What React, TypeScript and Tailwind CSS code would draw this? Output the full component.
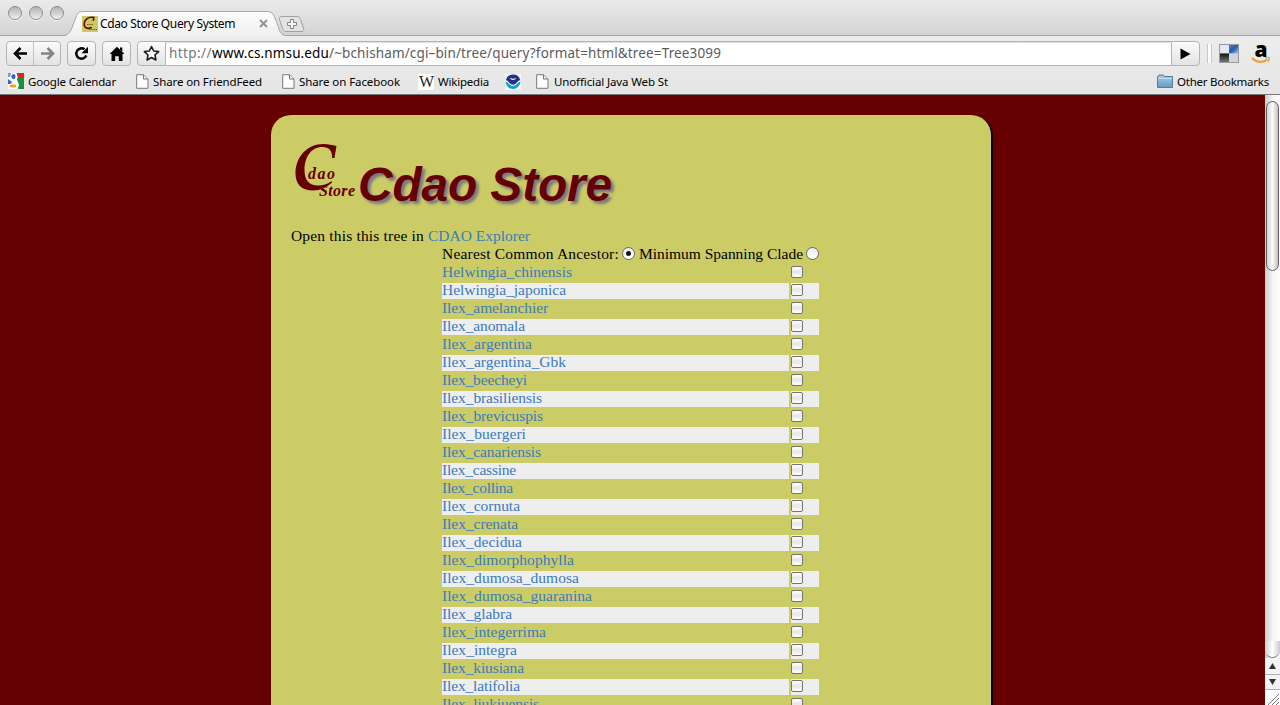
import { useLayoutEffect, useRef } from "react";
import type { ReactNode } from "react";

/** Single line of text tracked out (or in) so that it spans `w` pixels. */
function Fit({ w, className = "", children }: { w: number; className?: string; children: ReactNode }) {
  const ref = useRef<HTMLSpanElement>(null);
  useLayoutEffect(() => {
    const el = ref.current;
    if (!el) return;
    el.style.letterSpacing = "0px";
    const n = (el.textContent || "").length;
    el.style.letterSpacing = `${(w - el.getBoundingClientRect().width) / n}px`;
  }, [w]);
  return (
    <span ref={ref} className={`inline-block shrink-0 whitespace-pre ${className}`}>
      {children}
    </span>
  );
}

const species: [string, number][] = [
  ["Helwingia_chinensis", 130],
  ["Helwingia_japonica", 124],
  ["Ilex_amelanchier", 106],
  ["Ilex_anomala", 83],
  ["Ilex_argentina", 90],
  ["Ilex_argentina_Gbk", 124],
  ["Ilex_beecheyi", 85],
  ["Ilex_brasiliensis", 100],
  ["Ilex_brevicuspis", 101],
  ["Ilex_buergeri", 84],
  ["Ilex_canariensis", 99],
  ["Ilex_cassine", 74],
  ["Ilex_collina", 71],
  ["Ilex_cornuta", 78],
  ["Ilex_crenata", 76],
  ["Ilex_decidua", 80],
  ["Ilex_dimorphophylla", 132],
  ["Ilex_dumosa_dumosa", 137],
  ["Ilex_dumosa_guaranina", 150],
  ["Ilex_glabra", 70],
  ["Ilex_integerrima", 104],
  ["Ilex_integra", 75],
  ["Ilex_kiusiana", 82],
  ["Ilex_latifolia", 78],
  ["Ilex_liukiuensis", 97],
];

function TrafficLight() {
  return (
    <span className="size-[14px] rounded-full border border-[#8b8b8b] bg-linear-to-b from-[#b5b5b5] via-[#cfcfcf] to-[#f0f0f0] shadow-[0_1px_0_#f4f4f4]" />
  );
}

function TabStrip() {
  return (
    <div className="flex h-9 items-start bg-linear-to-b from-[#ebebeb] to-[#d3d3d3] shadow-[inset_0_-1px_0_#a3a3a3]">
      <div className="flex gap-[7px] pt-[6px] pl-2">
        <TrafficLight />
        <TrafficLight />
        <TrafficLight />
      </div>
      <div className="relative h-9 w-[222px] shrink-0">
        <svg className="absolute inset-0" width="222" height="36" viewBox="0 0 222 36">
          <defs>
            <linearGradient id="tab" x1="0" y1="0" x2="0" y2="1">
              <stop offset="0" stopColor="#fcfcfc" />
              <stop offset="1" stopColor="#f0f0f0" />
            </linearGradient>
          </defs>
          <path
            d="M0 35.5 C5 35 7 31 9 25 L12 17 C13.500 13 15 11.500 19 11.500 H203 C208 11.500 209 14 211 18 L214 26 C216 32 217 35 222 35.500 V36 H0Z"
            fill="url(#tab)"
          />
          <path
            d="M0 35.500 C5 35 7 31 9 25 L12 17 C13.500 13 15 11.500 19 11.500 H203 C208 11.500 209 14 211 18 L214 26 C216 32 217 35 222 35.500"
            fill="none"
            stroke="#a6a6a6"
          />
        </svg>
        <div className="relative flex h-9 items-center pt-[11px] pl-[18px]">
          <svg width="16" height="16" viewBox="0 0 16 16" className="shrink-0">
            <rect width="16" height="16" fill="#c9ca63" />
            <path d="M11.300 4.800 L11.800 1.500 C6 .3 2 4 2.200 8.300 C2.300 12 6 13.600 9.700 11.300" fill="none" stroke="#680000" strokeWidth="1.600" />
            <path d="M5 8.500h6M7 13.500h8" stroke="#9a4a1c" strokeWidth="1.200" strokeDasharray="1.500 .7" />
          </svg>
          <Fit w={135} className="ml-[2px] text-[12px] leading-4">Cdao Store Query System</Fit>
          <svg width="9" height="9" viewBox="0 0 9 9" className="ml-6 shrink-0">
            <path d="M1 1l7 7M8 1l-7 7" stroke="#929292" strokeWidth="1.900" />
          </svg>
        </div>
      </div>
      <svg width="28" height="18" viewBox="0 0 28 18" className="-ml-[8px] mt-[15px] shrink-0">
        <path d="M4 1.500 H19 C21 1.500 22 3 22.500 4.500 L25.500 13 C26.200 15 25.500 16.500 24 16.500 H8 C6 16.500 5 15 4.500 13.500 L1.500 4.500 C1 2.500 2 1.500 4 1.500Z" fill="#e3e3e3" stroke="#a0a0a0" />
        <path d="M12.500 4.500h3v3h3v3h-3v3h-3v-3h-3v-3h3z" fill="#f4f4f4" stroke="#858585" />
      </svg>
    </div>
  );
}

const btn =
  "flex h-[25px] shrink-0 items-center justify-center rounded-[4px] border border-[#b4b4b4] bg-linear-to-b from-[#fbfbfb] to-[#e3e3e3]";

function Arrow({ className }: { className: string }) {
  return (
    <svg width="15" height="13" viewBox="0 0 15 13" className={className}>
      <path d="M7.500 1 L2 6.500 L7.500 12 M2.500 6.500H14" fill="none" stroke="currentColor" strokeWidth="2.600" />
    </svg>
  );
}

function Toolbar() {
  return (
    <div className="flex h-[34px] items-start pt-[5px] pl-[6px]">
      <div className={`${btn} w-[55px]`}>
        <span className="flex h-full flex-1 items-center justify-center border-r border-[#c4c4c4]">
          <Arrow className="text-black" />
        </span>
        <span className="flex flex-1 items-center justify-center">
          <Arrow className="rotate-180 text-[#848484]" />
        </span>
      </div>
      <div className={`${btn} ml-[6px] w-[29px]`}>
        <svg width="15" height="15" viewBox="0 0 15 15">
          <path d="M12.300 9.600A5.200 5.200 0 1 1 10.500 3.300" fill="none" stroke="#000" strokeWidth="2.500" />
          <path d="M14 .8v6.500H7.500z" fill="#000" />
        </svg>
      </div>
      <div className={`${btn} ml-[6px] w-[29px]`}>
        <svg width="16" height="16" viewBox="0 0 16 16">
          <path d="M8 .7 L15.500 8 H13.500 V15 H9.800 V10.300 H6.200 V15 H2.500 V8 H.5Z M11 1.500h2.300v4L11 3.500z" fill="#000" />
        </svg>
      </div>
      <div className={`${btn} ml-[6px] w-[29px] rounded-r-none`}>
        <svg width="17" height="17" viewBox="0 0 17 17">
          <path d="M8.500 1.500 L10.700 6 L15.600 6.600 L12 10 L12.900 15 L8.500 12.500 L4.100 15 L5 10 L1.400 6.600 L6.300 6Z" fill="#fff" stroke="#1c1c1c" strokeWidth="1.600" strokeLinejoin="round" />
        </svg>
      </div>
      <div className="flex h-[25px] w-[1005px] items-center border-y border-[#b4b4b4] bg-white pl-[3px] text-[13.5px] text-[#5c5c5c] shadow-[inset_0_1px_1px_#dedede]">
        <Fit w={43} className="text-[#777]">http://</Fit>
        <Fit w={117} className="text-black">www.cs.nmsu.edu</Fit>
        <Fit w={392}>/~bchisham/cgi–bin/tree/query?format=html&tree=Tree3099</Fit>
      </div>
      <div className={`${btn} w-[29px] rounded-l-none`}>
        <svg width="11" height="12" viewBox="0 0 11 12">
          <path d="M.5.500 L10.500 6 L.5 11.500Z" fill="#000" />
        </svg>
      </div>
      <div className="mt-[3px] ml-[7px] h-[19px] w-[5px] shrink-0 border-x border-[#c7c7c7] bg-[#fafafa]" />
      <svg width="21" height="20" viewBox="0 0 21 20" className="mt-[3px] ml-[7px] shrink-0">
        <defs>
          <linearGradient id="deep" x1="0" y1="0" x2="1" y2="1">
            <stop offset="0" stopColor="#4a82cc" />
            <stop offset=".5" stopColor="#245bae" />
            <stop offset="1" stopColor="#a9c8ec" />
          </linearGradient>
          <linearGradient id="dark" x1="0" y1="0" x2="0" y2="1">
            <stop offset="0" stopColor="#111" />
            <stop offset="1" stopColor="#777" />
          </linearGradient>
        </defs>
        <rect x=".5" y=".5" width="19" height="18" fill="#bbb" stroke="#999" />
        <path d="M1 1h9v8.500H1z" fill="#e4e9f0" />
        <path d="M10 1h9v8.500h-9z" fill="url(#deep)" />
        <path d="M1 9.500h9V18H1z" fill="url(#dark)" />
        <path d="M10 9.500h9V18h-9z" fill="#d0d4dc" />
      </svg>
      <div className="relative ml-[11px] h-[24px] w-[20px] shrink-0">
        <span className="block -translate-y-px text-center font-['Open_Sans',sans-serif] text-[21px] leading-[18px] font-extrabold text-black">a</span>
        <svg width="20" height="9" viewBox="0 0 20 9" className="absolute top-[15px] left-0">
          <path d="M1 2 C5 6.500 12 7 16.500 3.500" fill="none" stroke="#e9a03c" strokeWidth="2.200" />
          <path d="M14 2 Q17 1 18.300 1.800 Q18.500 3.500 17 5.500" fill="none" stroke="#e9a03c" strokeWidth="1.300" />
        </svg>
      </div>
    </div>
  );
}

function PageIcon() {
  return (
    <svg width="13" height="15" viewBox="0 0 13 15" className="shrink-0 -translate-y-px">
      <path d="M.7.700 H7.500 L12 5 V14.300 H.7Z" fill="#fdfdfd" stroke="#777" />
      <path d="M7.500.700 V5 H12" fill="#ececec" stroke="#777" />
    </svg>
  );
}

function BookmarksBar() {
  return (
    <div className="flex h-[25px] items-center pb-px pl-2 text-[11.5px] text-black">
      <svg width="16" height="16" viewBox="0 0 16 16" className="shrink-0 -translate-y-px">
        <rect width="16" height="16" fill="#fff" />
        <path d="M0 0h3v4H0z" fill="#6f9be6" />
        <path d="M8.500 0H16v5h-6z" fill="#e02420" />
        <path d="M9 5h7v11h-6l1-5-2-3z" fill="#159141" />
        <path d="M0 6l4 3-1 2H0z" fill="#3167c8" />
        <ellipse cx="5.500" cy="3.600" rx="2.700" ry="3.200" fill="#2f68c8" stroke="#fff" strokeWidth="1.200" />
        <ellipse cx="5" cy="13" rx="3.900" ry="2.200" fill="#f0a31f" stroke="#fff" strokeWidth="1" />
        <path d="M7.500 6q3 2.500 0 4" fill="none" stroke="#fff" strokeWidth="1.500" />
      </svg>
      <Fit w={88} className="ml-1">Google Calendar</Fit>
      <div className="ml-5 flex items-center gap-1"><PageIcon /><Fit w={109}>Share on FriendFeed</Fit></div>
      <div className="ml-5 flex items-center gap-1"><PageIcon /><Fit w={101}>Share on Facebook</Fit></div>
      <span className="ml-[18px] flex size-4 shrink-0 items-center justify-center bg-white font-['Liberation_Serif',serif] text-[16px] leading-4 tracking-[-1px] text-[#222]">W</span>
      <Fit w={51} className="ml-1">Wikipedia</Fit>
      <svg width="16" height="16" viewBox="0 0 16 16" className="ml-4 shrink-0">
        <rect width="16" height="16" fill="#f4f8fb" />
        <path d="M.8 6 A7.500 7.500 0 0 1 15.200 6 Q13 6.500 11.500 9 Q8 12.500 4.500 9 Q3 6.500 .8 6Z" fill="#20308b" />
        <path d="M.5 7.500 Q2.500 7.500 4 10 Q8 14 12 10 Q13.500 7.500 15.500 7.500 A7.500 7.500 0 0 1 .5 7.500Z" fill="#12a0cb" />
        <path d="M4.500 3.800 Q6.500 4.800 8 4.800 Q9.500 4.800 11.500 3.800 Q10 6 8 6 Q6 6 4.500 3.800Z" fill="#fff" />
      </svg>
      <div className="ml-[15px] flex items-center gap-[5px]"><PageIcon /><Fit w={114}>Unofficial Java Web St</Fit></div>
      <svg width="17" height="15" viewBox="0 0 17 15" className="mr-[3px] ml-auto shrink-0 -translate-y-px">
        <defs>
          <linearGradient id="folder" x1="0" y1="0" x2="0" y2="1">
            <stop offset="0" stopColor="#a9cde2" />
            <stop offset="1" stopColor="#649dc2" />
          </linearGradient>
        </defs>
        <path d="M.5 13.500 V3 L2 1 H6.500 L7.500 2.500 H15.500 V13.500Z" fill="url(#folder)" stroke="#4c809f" />
        <path d="M1 4.500H15" stroke="#c5e0ee" />
      </svg>
      <Fit w={92} className="mr-[11px]">Other Bookmarks</Fit>
    </div>
  );
}

function Radio({ checked = false }: { checked?: boolean }) {
  return (
    <span className="flex size-[13px] shrink-0 items-center justify-center rounded-full border border-[#6b6b6b] bg-linear-to-b from-[#ededed] to-white">
      {checked && <span className="size-[5px] rounded-full bg-[#151515]" />}
    </span>
  );
}

function SpeciesRow({ name, width, striped }: { name: string; width: number; striped: boolean }) {
  const bg = striped ? "bg-[#eeeeee]" : "";
  return (
    <div className="flex h-4 gap-[2px]">
      <div className={`flex w-[347px] items-start ${bg}`}>
        <a className="-mt-px flex text-[#3b7bbd]"><Fit w={width} className="leading-4">{name}</Fit></a>
      </div>
      <div className={`w-[28px] pt-px ${bg}`}>
        <span className="block size-3 rounded-[2px] border border-[#747474] bg-linear-to-b from-white via-[#e6e6e6] to-white" />
      </div>
    </div>
  );
}

function Logo() {
  return (
    <svg width="66" height="62" viewBox="0 0 66 62" className="shrink-0">
      <path
        d="M45.500 6 L43.500 18 L41 18 C41.500 10.500 38 7 31.500 7 C20 7 13.500 17 13.500 30 C13.500 40 18 45.500 27 45.500 C32 45.500 36 44.500 40.500 41 L41 42.500 C36 47.500 29 50.500 22 50.500 C10.500 50.500 4.500 44 4.500 33.500 C4.500 17 16 4 32.500 4 C37.500 4 41 5 45.500 6Z"
        fill="#660000"
      />
      <text x="17" y="39" fill="#660000" fontSize="16" fontStyle="italic" fontWeight="bold" fontFamily="Liberation Serif, serif" textLength="27">dao</text>
      <text x="28" y="56" fill="#660000" fontSize="16" fontStyle="italic" fontWeight="bold" fontFamily="Liberation Serif, serif" textLength="36">Store</text>
    </svg>
  );
}

function Scrollbar() {
  return (
    <div className="flex w-[15px] shrink-0 flex-col bg-linear-to-r from-[#cccccc] via-[#f5f5f5] to-white">
      <div className="mt-[6px] ml-px h-[170px] w-[13px] shrink-0 rounded-full border border-[#626262] bg-linear-to-r from-[#d3d3d3] via-[#fafafa] to-[#c1c1c1]" />
      <div className="h-[370px] shrink-0" />
      <div className="h-[17px] shrink-0 rounded-b-full border-b border-[#808080] bg-linear-to-r from-[#d0d0d0] via-white to-[#ccc]" />
      <div className="flex h-4 shrink-0 items-center justify-center bg-[#f3f3f3]">
        <svg width="7" height="6"><path d="M3.500 0L7 6H0z" fill="#333" /></svg>
      </div>
      <div className="flex h-4 shrink-0 items-center justify-center border-y border-[#b0b0b0] bg-[#f3f3f3]">
        <svg width="7" height="6"><path d="M3.500 6L7 0H0z" fill="#333" /></svg>
      </div>
      <svg width="15" height="15" className="shrink-0">
        <rect width="15" height="15" fill="#fff" />
        <path d="M3 15L14 4M7 15L14 8M11 15L14 12" stroke="#777" />
      </svg>
    </div>
  );
}

export default function App() {
  return (
    <div className="flex h-[705px] w-[1280px] flex-col overflow-hidden bg-white font-['Noto_Sans','Open_Sans',sans-serif]">
      <header className="h-[95px] shrink-0 border-b border-[#777] bg-linear-to-b from-[#f1f1f1] to-[#e5e5e5]">
        <TabStrip />
        <Toolbar />
        <BookmarksBar />
      </header>
      <div className="flex min-h-0 flex-1 bg-[#660000]">
        <main className="min-w-0 flex-1 overflow-hidden pt-5 pl-[271px] font-['Liberation_Serif',serif] text-[15.5px] leading-[18px] text-black">
          <div className="h-[640px] w-[720px] rounded-t-[20px] bg-[#cccc66] pt-[25px] pl-5 shadow-[2px_1px_0_#0a0000]">
            <div className="flex h-[87px] items-start">
              <Logo />
              <h1 className="mt-[17px] ml-px font-['Liberation_Sans',sans-serif] text-[48px] leading-[56px] font-bold text-[#660000] italic [text-shadow:3px_3px_3px_#77777f]">
                <Fit w={254}>Cdao Store</Fit>
              </h1>
            </div>
            <p className="flex">
              <Fit w={137}>Open this this tree in </Fit>
              <a className="text-[#3b7bbd]"><Fit w={102}>CDAO Explorer</Fit></a>
            </p>
            <div className="ml-[151px] w-[377px]">
              <div className="flex h-[18px] items-center">
                <Fit w={177}>Nearest Common Ancestor:</Fit>
                <span className="mr-[4px] ml-[3px] flex -translate-y-px"><Radio checked /></span>
                <Fit w={164}>Minimum Spanning Clade</Fit>
                <span className="ml-[3px] flex -translate-y-px"><Radio /></span>
              </div>
              <div className="flex flex-col gap-[2px] pt-[2px]">
                {species.map(([name, width], i) => (
                  <SpeciesRow key={name} name={name} width={width} striped={i % 2 === 1} />
                ))}
              </div>
            </div>
          </div>
        </main>
        <Scrollbar />
      </div>
    </div>
  );
}
